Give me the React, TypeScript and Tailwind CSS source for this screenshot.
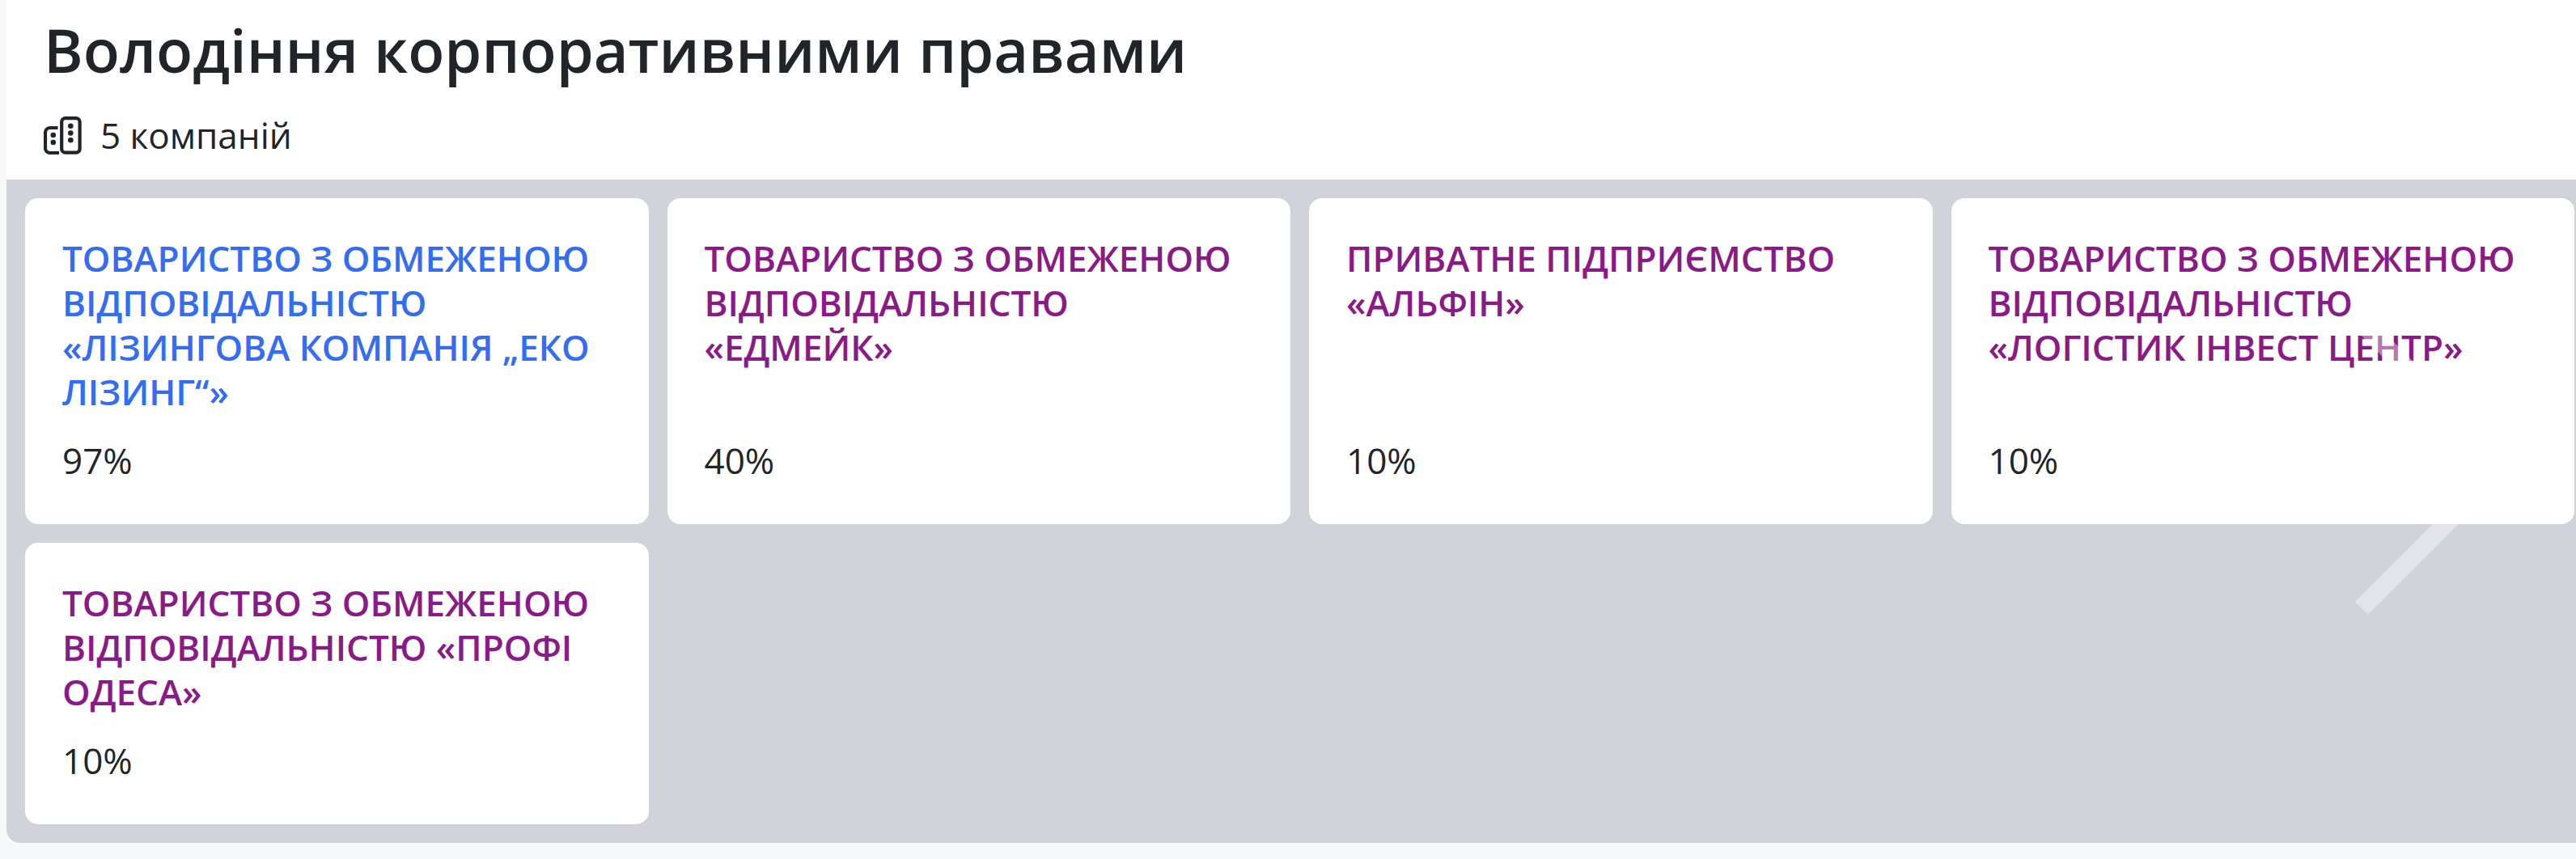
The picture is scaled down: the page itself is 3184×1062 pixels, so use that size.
import React from 'react';

interface Company {
  name: string;
  share: string;
  visited: boolean;
}

const companies: Company[] = [
  { name: 'ТОВАРИСТВО З ОБМЕЖЕНОЮ ВІДПОВІДАЛЬНІСТЮ «ЛІЗИНГОВА КОМПАНІЯ „ЕКО ЛІЗИНГ“»', share: '97%', visited: false },
  { name: 'ТОВАРИСТВО З ОБМЕЖЕНОЮ ВІДПОВІДАЛЬНІСТЮ «ЕДМЕЙК»', share: '40%', visited: true },
  { name: 'ПРИВАТНЕ ПІДПРИЄМСТВО «АЛЬФІН»', share: '10%', visited: true },
  { name: 'ТОВАРИСТВО З ОБМЕЖЕНОЮ ВІДПОВІДАЛЬНІСТЮ «ЛОГІСТИК ІНВЕСТ ЦЕНТР»', share: '10%', visited: true },
  { name: 'ТОВАРИСТВО З ОБМЕЖЕНОЮ ВІДПОВІДАЛЬНІСТЮ «ПРОФІ ОДЕСА»', share: '10%', visited: true },
];

const BuildingsIcon: React.FC = () => (
  <svg viewBox="0 0 47 47" fill="none" className="size-[47px] shrink-0" aria-hidden="true">
    <g stroke="currentColor" strokeWidth="4.2">
      <rect x="22.2" y="2.1" width="22.4" height="42.6" rx="4.5" />
      <path d="M17.5 14H8a6 6 0 0 0-6 6v19a6 6 0 0 0 6 6h11" />
    </g>
    <g fill="currentColor">
      <circle cx="33.3" cy="11.8" r="3.3" />
      <circle cx="33.3" cy="20.5" r="3.3" />
      <circle cx="33.3" cy="29.2" r="3.3" />
      <circle cx="11.8" cy="23" r="3.3" />
      <circle cx="11.8" cy="32" r="3.3" />
    </g>
  </svg>
);

const CompanyCard: React.FC<{ company: Company }> = ({ company }) => (
  <li className="flex flex-col justify-between gap-[23px] rounded-2xl bg-white px-[46px] pt-[47px] pb-[45px]">
    <h3 className="text-[44px] leading-[55px] font-semibold">
      <a href="#" className={company.visited ? 'text-[#8a1a86]' : 'text-[#346df1]'}>
        {company.name}
      </a>
    </h3>
    <p className="text-[44px] leading-[68px]">{company.share}</p>
  </li>
);

export default function App() {
  return (
    <main className="min-h-screen bg-[#f8f9fb] pl-2 font-['Open_Sans','Noto_Sans',sans-serif] text-[#212529]">
      <section className="overflow-hidden rounded-bl-2xl bg-white">
        <header className="flex flex-col gap-[23px] px-[46px] pt-3.5 pb-[21px]">
          <h2 className="text-[74px] leading-[96px] font-semibold">Володіння корпоративними правами</h2>
          <div className="flex items-center gap-[23px] text-[44px] leading-[68px]">
            <BuildingsIcon />
            <span>5 компаній</span>
          </div>
        </header>

        <div className="relative bg-[#d0d3da] py-[23px] pr-0.5 pl-[23px]">
          <ul className="grid grid-cols-4 gap-[23px]">
            {companies.map((company) => (
              <CompanyCard key={company.name} company={company} />
            ))}
          </ul>

          <button type="button" aria-label="Далі" className="absolute top-[169px] right-[73px] text-white/40">
            <svg viewBox="0 0 200 369" className="h-[369px] w-[200px]" fill="currentColor">
              <path d="M0 16 16 0 200 184.5 16 369 0 353 168 184.5Z" />
            </svg>
          </button>
        </div>
      </section>
    </main>
  );
}
